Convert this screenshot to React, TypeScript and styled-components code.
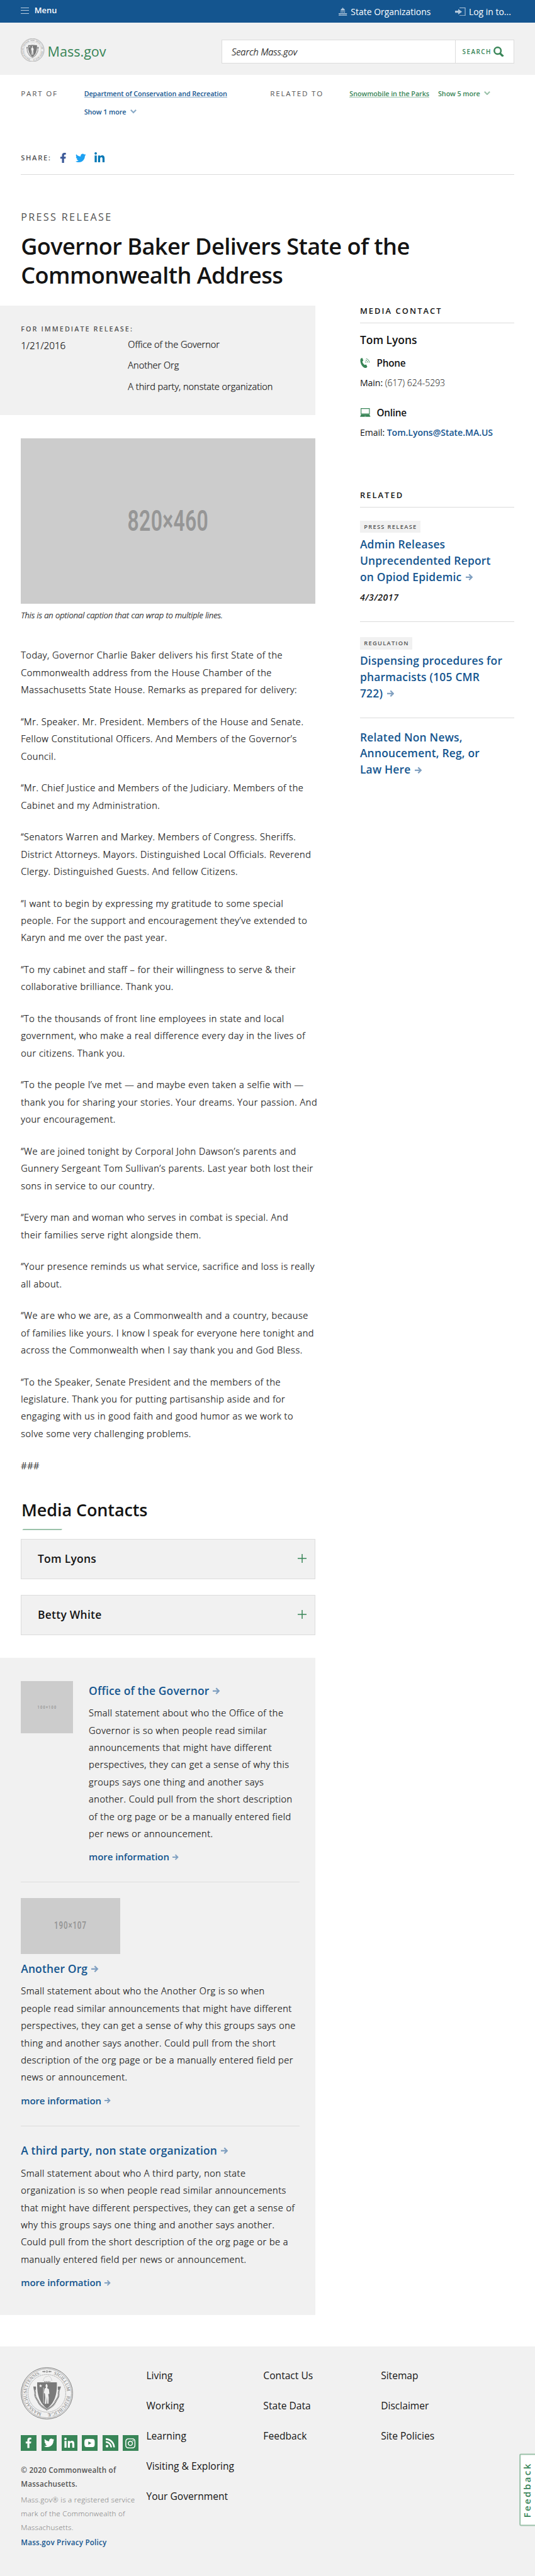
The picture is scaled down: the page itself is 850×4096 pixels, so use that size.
import React from "react";
import styled, { createGlobalStyle, css } from "styled-components";
import { FaFacebookF, FaTwitter, FaLinkedinIn, FaRss, FaInstagram } from "react-icons/fa";

/* 1rem = 10 design units */
const GlobalStyle = createGlobalStyle`
  html { font-size: 8.3008px; }
  body {
    margin: 0;
    background: #fff;
    color: #141414;
    font-family: "Open Sans", Lato, sans-serif;
    overflow-x: hidden;
  }
  *, *::before, *::after { box-sizing: border-box; }
  h1, h2, h3, p, ul { margin: 0; padding: 0; font-weight: inherit; }
  ul { list-style: none; }
  a { color: inherit; text-decoration: none; }
  svg { display: block; flex: none; }
`;

const blue = "#14558f";
const green = "#388557";
const grey = "#f1f1f1";
const rule = "#dcdcdc";

/* reading weight: between light and regular */
const bookWeight = css`
  font-weight: 300;
  -webkit-text-stroke: 0.25px currentColor;
`;

const Page = styled.div`
  position: relative;
  width: 102.4rem;
  height: 493.5rem;
  white-space: nowrap;
  overflow: hidden;
`;

/* ---------- header ---------- */

const TopBar = styled.nav`
  display: flex;
  justify-content: space-between;
  height: 4.3rem;
  padding: 0 4.6rem 0 4rem;
  background: ${blue};
  color: #fff;
`;

const MenuButton = styled.div`
  display: flex;
  align-items: center;
  gap: 1.1rem;
  height: 4rem;
  font-size: 1.55rem;
  font-weight: 600;
  line-height: 1;
`;

const Bars = styled.span`
  width: 1.5rem;
  height: 1.2rem;
  border: solid rgba(255, 255, 255, 0.7);
  border-width: 0.2rem 0;
  display: flex;
  align-items: center;
  &::before {
    content: "";
    width: 100%;
    height: 0.2rem;
    background: rgba(255, 255, 255, 0.7);
  }
`;

const UtilityNav = styled.div`
  display: flex;
  gap: 4.7rem;
  height: 4.5rem;
  font-size: 1.68rem;
  line-height: 1;
`;

const UtilityItem = styled.div<{ $gap: string }>`
  display: flex;
  align-items: center;
  gap: ${(p) => p.$gap};
`;

const Masthead = styled.header`
  display: flex;
  justify-content: space-between;
  align-items: center;
  height: 10rem;
  padding: 0 4rem;
  background: ${grey};
`;

const Brand = styled.div`
  display: flex;
  align-items: center;
  gap: 0.6rem;
  padding-top: 1.2rem;
  color: ${green};
  font-size: 2.6rem;
  line-height: 1;
  svg {
    margin-top: -0.6rem;
  }
`;

const SearchBox = styled.div`
  display: flex;
  width: 56rem;
  height: 4.6rem;
  margin-top: 1.2rem;
  border: 0.2rem solid ${rule};
  background: #fff;
`;

const SearchField = styled.div`
  flex: 1;
  display: flex;
  align-items: center;
  padding-left: 1.8rem;
  font-size: 1.75rem;
  font-style: italic;
  ${bookWeight}
`;

const SearchButton = styled.div`
  display: flex;
  align-items: center;
  gap: 0.4rem;
  width: 11.2rem;
  padding-left: 1.3rem;
  border-left: 0.2rem solid ${rule};
  color: ${green};
  font-size: 1.2rem;
  font-weight: 600;
  letter-spacing: 0.17rem;
`;

/* ---------- relationship links ---------- */

const Relationships = styled.section`
  display: grid;
  grid-template-columns: 12.1rem 35.6rem 15.2rem 1fr;
  padding: 1.8rem 4rem 0;
  font-size: 1.3rem;
  line-height: 3.5rem;
`;

const RelLabel = styled.div`
  color: #535353;
  font-size: 1.4rem;
  letter-spacing: 0.22rem;
`;

const RelList = styled.div<{ $color: string }>`
  display: flex;
  flex-wrap: wrap;
  align-content: flex-start;
  column-gap: 1.7rem;
  height: 7rem;
  color: ${(p) => p.$color};
  font-weight: 600;
  letter-spacing: -0.01rem;
`;

const RelLink = styled.a<{ $line: string }>`
  height: 2.6rem;
  margin-bottom: 0.9rem;
  border-bottom: 0.1rem solid ${(p) => p.$line};
`;

const ShowMore = styled.a`
  display: flex;
  align-items: center;
  gap: 0.8rem;
  height: 3.5rem;
`;

const ShareRow = styled.div`
  display: flex;
  align-items: center;
  height: 4.4rem;
  margin: 6rem 4rem 0;
  padding-bottom: 2rem;
  border-bottom: 0.1rem solid ${rule};
`;

const ShareLabel = styled.span`
  width: 7.1rem;
  color: #535353;
  font-size: 1.35rem;
  font-weight: 600;
  letter-spacing: 0.2rem;
`;

const ShareIcon = styled.span<{ $color: string }>`
  margin-right: 1.4rem;
  color: ${(p) => p.$color};
`;

/* ---------- title ---------- */

const TitleBlock = styled.section`
  padding: 6.95rem 4rem 0;
  height: 25rem;
`;

const Kicker = styled.p`
  color: #535353;
  font-size: 1.95rem;
  line-height: 2.4rem;
  letter-spacing: 0.28rem;
`;

const Title = styled.h1`
  margin-top: 1.6rem;
  font-size: 4.35rem;
  font-weight: 600;
  line-height: 5.5rem;
  letter-spacing: -0.065rem;
`;

const Columns = styled.main`
  display: grid;
  grid-template-columns: 60.4rem 29.5rem;
  column-gap: 8.5rem;
  height: 391rem;
`;

/* ---------- article ---------- */

const ReleaseBox = styled.section`
  height: 21rem;
  padding: 3.5rem 0 0 4rem;
  background: ${grey};
`;

const ReleaseLabel = styled.p`
  color: #535353;
  font-size: 1.3rem;
  font-weight: 600;
  line-height: 2rem;
  letter-spacing: 0.25rem;
`;

const ReleaseGrid = styled.div`
  display: grid;
  grid-template-columns: 20.5rem 1fr;
  font-size: 1.75rem;
  line-height: 4rem;
  ${bookWeight}
`;

const ReleaseDate = styled.div`
  font-size: 1.83rem;
  padding-top: 0.2rem;
`;

const Placeholder = styled.div<{ $w: string; $h: string; $fs: string; $ls?: string }>`
  display: flex;
  align-items: center;
  justify-content: center;
  width: ${(p) => p.$w};
  height: ${(p) => p.$h};
  background: #ccc;
  color: #969696;
  font-family: Roboto, sans-serif;
  font-weight: 600;
  font-size: ${(p) => p.$fs};
  letter-spacing: ${(p) => p.$ls ?? "0.05rem"};
  line-height: 1;
  span {
    transform: scaleX(0.7);
  }
`;

const Figure = styled.div`
  margin: 4.5rem 0 0 4rem;
`;

const Caption = styled.p`
  margin-top: 1.1rem;
  font-size: 1.55rem;
  font-style: italic;
  line-height: 2.4rem;
  ${bookWeight}
`;

const Article = styled.div`
  margin: 4.8rem 0 0 4rem;
  font-size: 1.75rem;
  line-height: 3.3rem;
  letter-spacing: 0.066rem;
  ${bookWeight}
  p + p {
    margin-top: 2.8rem;
  }
`;

const Line = styled.span`
  display: block;
`;

const ContactsHeading = styled.h2`
  margin: 4.45rem 0 0 4.1rem;
  height: 7.95rem;
  font-size: 3.25rem;
  font-weight: 600;
  line-height: 4.8rem;
  letter-spacing: -0.01rem;
  &::after {
    content: "";
    display: block;
    width: 7.5rem;
    height: 0.3rem;
    margin: 1.3rem 0 0 0.2rem;
    background: #9bc2aa;
    transform: skewX(-40deg);
  }
`;

const AccordionItem = styled.div`
  display: flex;
  justify-content: space-between;
  align-items: center;
  width: 56.4rem;
  height: 7.7rem;
  margin: 0 0 3rem 4rem;
  padding: 0 1.6rem 0.2rem 3.1rem;
  border: 0.2rem solid ${rule};
  background: ${grey};
  font-size: 2.1rem;
  font-weight: 600;
  letter-spacing: 0.035rem;
`;

const Orgs = styled.section`
  height: 125.9rem;
  margin-top: 4.4rem;
  padding: 4.5rem 3rem 0 4rem;
  background: ${grey};
  font-size: 1.75rem;
  line-height: 3.3rem;
`;

const Org = styled.div<{ $side?: boolean; $top?: string }>`
  padding-top: ${(p) => p.$top ?? "0"};
  ${(p) =>
    p.$side &&
    css`
      display: grid;
      grid-template-columns: 10rem 1fr;
      column-gap: 3rem;
    `}
  & + & {
    border-top: 0.1rem solid ${rule};
  }
`;

const OrgTitle = styled.h3<{ $top: string }>`
  display: flex;
  align-items: center;
  gap: 0.7rem;
  margin-top: ${(p) => p.$top};
  color: ${blue};
  font-size: 2.1rem;
  font-weight: 600;
  line-height: 3rem;
  letter-spacing: 0.02rem;
`;

const OrgText = styled.p`
  margin-top: 1.15rem;
  letter-spacing: 0.062rem;
  ${bookWeight}
`;

const MoreLink = styled.a`
  display: flex;
  align-items: center;
  gap: 0.6rem;
  height: 3.3rem;
  margin: 1.2rem 0 3.1rem;
  color: ${blue};
  font-size: 1.8rem;
  font-weight: 600;
  letter-spacing: -0.006rem;
`;

/* ---------- sidebar ---------- */

const SideHeading = styled.h2`
  height: 3.4rem;
  border-bottom: 0.2rem solid ${rule};
  font-size: 1.55rem;
  font-weight: 600;
  line-height: 2.1rem;
  letter-spacing: 0.25rem;
`;

const Person = styled.h3`
  margin-top: 1.7rem;
  font-size: 2.1rem;
  font-weight: 600;
  line-height: 3rem;
`;

const Method = styled.div<{ $top: string }>`
  display: flex;
  align-items: center;
  gap: 1.2rem;
  margin-top: ${(p) => p.$top};
  font-size: 1.85rem;
  font-weight: 600;
  line-height: 2.6rem;
  letter-spacing: -0.03rem;
`;

const MethodValue = styled.p`
  margin-top: 1.3rem;
  font-size: 1.7rem;
  font-weight: 400;
  line-height: 2.4rem;
  letter-spacing: -0.008rem;
  b {
    color: ${blue};
    font-weight: 600;
  }
  span {
    font-weight: 300;
  }
`;

const Related = styled.section`
  margin-top: 9.7rem;
`;

const RelatedItem = styled.div<{ $h: string; $top: string }>`
  height: ${(p) => p.$h};
  padding-top: ${(p) => p.$top};
  & + & {
    border-top: 0.1rem solid ${rule};
  }
`;

const Tag = styled.span`
  display: inline-block;
  height: 2.4rem;
  margin-bottom: 0.7rem;
  padding: 0 0.6rem 0 0.75rem;
  background: ${grey};
  color: #535353;
  font-size: 1.12rem;
  font-weight: 600;
  line-height: 2.4rem;
  letter-spacing: 0.16rem;
  vertical-align: top;
`;

const RelatedLink = styled.a`
  display: block;
  color: ${blue};
  font-size: 2.1rem;
  font-weight: 600;
  line-height: 3.1rem;
  letter-spacing: 0.024rem;
  svg {
    display: inline-block;
    margin-left: 0.8rem;
  }
`;

const RelatedDate = styled.p`
  margin-top: 1.2rem;
  font-size: 1.7rem;
  font-style: italic;
  font-weight: 600;
  line-height: 2.4rem;
  letter-spacing: 0.06rem;
`;

/* ---------- footer ---------- */

const Footer = styled.footer`
  display: grid;
  grid-template-columns: 24rem 22.4rem 22.5rem 1fr;
  height: 44rem;
  padding: 4rem 0 0 4rem;
  background: ${grey};
`;

const SocialRow = styled.div`
  display: flex;
  gap: 0.9rem;
  margin-top: 3rem;
`;

const SocialTile = styled.span`
  display: flex;
  align-items: center;
  justify-content: center;
  width: 3rem;
  height: 3rem;
  background: ${green};
  color: #fff;
`;

const Legal = styled.p<{ $top: string; $color: string; $weight: number }>`
  margin-top: ${(p) => p.$top};
  color: ${(p) => p.$color};
  font-size: 1.4rem;
  font-weight: ${(p) => p.$weight};
  line-height: 2.6rem;
  letter-spacing: 0.03rem;
`;

const FooterLinks = styled.ul`
  padding-top: 0.2rem;
  font-size: 1.88rem;
  line-height: 2.8rem;
  font-weight: 500;
  li {
    height: 5.78rem;
  }
`;

const FeedbackTab = styled.div`
  position: absolute;
  right: -0.4rem;
  top: 470.1rem;
  display: flex;
  align-items: center;
  justify-content: center;
  width: 3.4rem;
  height: 13.8rem;
  padding-left: 0.4rem;
  border: 0.3rem solid #9bc2aa;
  border-radius: 0 0.3rem 0.3rem 0;
  background: #fff;
  color: ${green};
  font-size: 1.8rem;
  font-weight: 600;
  letter-spacing: 0.3rem;
  line-height: 1;
  writing-mode: vertical-rl;
  transform: rotate(180deg);
`;

/* ---------- drawings ---------- */

const rem = (n: number) => `${n / 10}rem`;

const Icon = styled.svg<{ $w: number; $h: number }>`
  width: ${(p) => rem(p.$w)};
  height: ${(p) => rem(p.$h)};
`;

const Arrow = ({ w = 14 }: { w?: number }) => (
  <Icon viewBox="0 0 14 14" $w={w} $h={w} fill="none" stroke="#7f9fc0" strokeWidth="2.7">
    <path d="M0 7h11.5" />
    <path d="M6.4 1.6 11.8 7l-5.4 5.4" />
  </Icon>
);

const Chevron = ({ color }: { color: string }) => (
  <Icon viewBox="0 0 12 8" $w={12} $h={8} fill="none" stroke={color} strokeWidth="2.6">
    <path d="M1 1l5 5 5-5" />
  </Icon>
);

const Plus = () => (
  <Icon viewBox="0 0 17 17" $w={17} $h={17} stroke={green} strokeWidth="1.8">
    <path d="M0 8.5h17M8.5 0v17" />
  </Icon>
);

const Capitol = () => (
  <Icon viewBox="0 0 16 16" $w={16} $h={16} fill="#b3c8dc">
    <path d="M7.5 0h1v1.6C10.6 2 12 3.6 12 5.5H4C4 3.6 5.4 2 7.5 1.6z" />
    <path d="M3.5 6.5h9v1h-9zM4 8h1.6v2H4zM7.2 8h1.6v2H7.2zM10.4 8H12v2h-1.6zM0 10.8h16v1.5H0z" />
    <path d="M.6 12.8h1.6v1.7H.6zM3.2 12.8h1.6v1.7H3.2zM5.9 12.8h1.6v1.7H5.9zM8.5 12.8h1.6v1.7H8.5zM11.2 12.8h1.6v1.7h-1.6zM13.8 12.8h1.6v1.7h-1.6zM0 14.8h16V16H0z" />
  </Icon>
);

const Login = () => (
  <Icon viewBox="0 0 20 16" $w={20} $h={16} fill="#b3c8dc">
    <path d="M0 6h6V2.6L13.4 8 6 13.4V10H0z" />
    <path d="M8.5 0H20v16H8.5v-1.3h10.2V1.3H8.5z" />
  </Icon>
);

const Magnifier = () => (
  <Icon viewBox="0 0 20 20" $w={20} $h={20} fill="none" stroke={green}>
    <circle cx="8" cy="8" r="6.4" strokeWidth="3" />
    <path d="M12.4 12.8l6.2 6.2" strokeWidth="4" />
  </Icon>
);

const Phone = () => (
  <Icon viewBox="0 0 20 20" $w={20} $h={20} fill={green}>
    <path d="M1.6 1.3C2.4.5 3.8 0 4.6.6l1.6 4.2c.2.8-1.6 1.8-1.8 2.4.4 2.4 2.4 5.2 4.6 6.4.8.2 1.8-1.3 2.6-1l2.2 4c.2 1.4-1.8 3-3.6 2.8C5 18.6.6 11.4.6 5.4c0-1.6.2-3.2 1-4.1z" />
    <g fill="none" stroke={green} strokeWidth="1.1">
      <path d="M9.6 7.3c1 .2 1.7.9 2 2" />
      <path d="M10.6 4.5c2.4.4 3.8 2.3 4.1 4.6" />
      <path d="M11.6 1.7c3.8.6 6 3.6 6.3 7.4" />
    </g>
  </Icon>
);

const Laptop = () => (
  <Icon viewBox="0 0 20 17" $w={20} $h={17}>
    <path d="M2 .7h16V11H2z" fill="none" stroke={green} strokeWidth="1.4" />
    <path d="M2 12h16l2 4.5H0z" fill={green} />
    <path d="M8.5 15h3v.9h-3z" fill="#b9d3c3" />
  </Icon>
);

const Play = () => (
  <Icon viewBox="0 0 20 16" $w={20} $h={16}>
    <path
      fill="#fff"
      d="M4 .3Q10-.3 16 .3q3.4.3 3.7 3.5.4 4.2 0 8.4-.3 3.2-3.7 3.5-6 .6-12 0Q.6 15.4.3 12.2q-.4-4.2 0-8.4Q.6.6 4 .3z"
    />
    <path fill={green} d="M7.6 4.8v6.4L13.6 8z" />
  </Icon>
);

const Seal = ({ size, color = "#7a7a7a" }: { size: number; color?: string }) => {
  const id = `ring-${size}`;
  return (
    <Icon viewBox="0 0 100 100" $w={size} $h={size} fill="none" stroke={color}>
      <circle cx="50" cy="50" r="49.3" strokeWidth="1.2" />
      <circle cx="50" cy="50" r="47" strokeWidth="0.7" />
      <circle cx="50" cy="50" r="36" strokeWidth="0.8" strokeDasharray="1.2 .6" />
      <path id={id} d="M50 88.6A38.6 38.6 0 0 1 50 11.4A38.6 38.6 0 0 1 50 88.6" stroke="none" />
      <g fill={color} stroke="none" fontFamily="Liberation Serif, serif" fontSize="9.3">
        <text>
          <textPath href={`#${id}`} startOffset="10" textLength="99">MASSACHUSETTENSIS.</textPath>
        </text>
        <text>
          <textPath href={`#${id}`} startOffset="134" textLength="44">SIGILLUM</textPath>
        </text>
        <text>
          <textPath href={`#${id}`} startOffset="186" textLength="55">REIPUBLICÆ</textPath>
        </text>
      </g>
      <path d="M41 8.4l5 1.2v-2.4zM59 8.4l-5 1.2v-2.4z" fill={color} strokeWidth="0.6" />
      <circle cx="50" cy="8.4" r="1.7" strokeWidth="1.1" />
      <path d="M43 26.5c1-5 3-8.5 6-8.5s3-2 5-1c3 1.500 5 5 5.500 9.500" strokeWidth=".5" strokeDasharray="1 .5" />
      <path d="M45 27.5h12" strokeWidth="1.5" strokeDasharray="2.5 1.2" />
      <path
        d="M28 38c-3 5 0 8-.5 13-.5 6 3 9 6.5 16 3.5 7 9 10 16 14 7-4 12.5-7 16-14 3.5-7 7-10 6.5-16-.5-5 2.5-8-.5-13"
        strokeWidth="3.2"
        strokeDasharray="2 .7"
      />
      <path d="M24 37h5v6h-4zM71 37h6l-2 6h-4z" fill={color} stroke="none" />
      <path d="M31.5 29h37.5c1 20-3 39-19 50C34.5 68 30.5 49 31.5 29z" fill={color} stroke="none" />
      <g fill={grey} stroke="none">
        <path d="M38 32.5l.9 2 2.2.2-1.7 1.5.5 2.2-1.9-1.2-1.9 1.2.5-2.2-1.7-1.5 2.2-.2z" />
        <path d="M48.5 32l2 1.2 1 3-1 3.8 3.3 2.2 1 8.8-2.3.5L53.5 58l-.5 12h-2.2l-.8-14-1 14-3 .5 1-12.5-.8-7.5-2-1.500 1.500-8 2.700-1.500-1-4z" />
      </g>
      <path d="M43.5 39v30" stroke={grey} strokeWidth=".8" />
    </Icon>
  );
};

/* ---------- content ---------- */

const speech: string[][] = [
  [
    "Today, Governor Charlie Baker delivers his first State of the",
    "Commonwealth address from the House Chamber of the",
    "Massachusetts State House. Remarks as prepared for delivery:",
  ],
  [
    "“Mr. Speaker. Mr. President. Members of the House and Senate.",
    "Fellow Constitutional Officers. And Members of the Governor’s",
    "Council.",
  ],
  ["“Mr. Chief Justice and Members of the Judiciary. Members of the", "Cabinet and my Administration."],
  [
    "“Senators Warren and Markey. Members of Congress. Sheriffs.",
    "District Attorneys. Mayors. Distinguished Local Officials. Reverend",
    "Clergy. Distinguished Guests. And fellow Citizens.",
  ],
  [
    "“I want to begin by expressing my gratitude to some special",
    "people. For the support and encouragement they’ve extended to",
    "Karyn and me over the past year.",
  ],
  ["“To my cabinet and staff – for their willingness to serve & their", "collaborative brilliance. Thank you."],
  [
    "“To the thousands of front line employees in state and local",
    "government, who make a real difference every day in the lives of",
    "our citizens. Thank you.",
  ],
  [
    "“To the people I’ve met — and maybe even taken a selfie with —",
    "thank you for sharing your stories. Your dreams. Your passion. And",
    "your encouragement.",
  ],
  [
    "“We are joined tonight by Corporal John Dawson’s parents and",
    "Gunnery Sergeant Tom Sullivan’s parents. Last year both lost their",
    "sons in service to our country.",
  ],
  ["“Every man and woman who serves in combat is special. And", "their families serve right alongside them."],
  ["“Your presence reminds us what service, sacrifice and loss is really", "all about."],
  [
    "“We are who we are, as a Commonwealth and a country, because",
    "of families like yours. I know I speak for everyone here tonight and",
    "across the Commonwealth when I say thank you and God Bless.",
  ],
  [
    "“To the Speaker, Senate President and the members of the",
    "legislature. Thank you for putting partisanship aside and for",
    "engaging with us in good faith and good humor as we work to",
    "solve some very challenging problems.",
  ],
  ["###"],
];

const Lines = ({ of }: { of: string[] }) => (
  <>
    {of.map((t) => (
      <Line key={t}>{t}</Line>
    ))}
  </>
);

const More = () => (
  <MoreLink>
    more information <Arrow w={12} />
  </MoreLink>
);

export default function App() {
  return (
    <Page>
      <GlobalStyle />
      <TopBar>
        <MenuButton>
          <Bars />
          Menu
        </MenuButton>
        <UtilityNav>
          <UtilityItem $gap="0.7rem">
            <Capitol />
            State Organizations
          </UtilityItem>
          <UtilityItem $gap="0.6rem">
            <Login />
            Log in to...
          </UtilityItem>
        </UtilityNav>
      </TopBar>
      <Masthead>
        <Brand>
          <Seal size={45} />
          Mass.gov
        </Brand>
        <SearchBox>
          <SearchField>Search Mass.gov</SearchField>
          <SearchButton>
            SEARCH <Magnifier />
          </SearchButton>
        </SearchBox>
      </Masthead>

      <Relationships>
        <RelLabel>PART OF</RelLabel>
        <RelList $color={blue}>
          <RelLink $line="#89aac7">Department of Conservation and Recreation</RelLink>
          <ShowMore>
            Show 1 more <Chevron color="#89aac7" />
          </ShowMore>
        </RelList>
        <RelLabel>RELATED TO</RelLabel>
        <RelList $color={green}>
          <RelLink $line="#9bc2aa">Snowmobile in the Parks</RelLink>
          <ShowMore>
            Show 5 more <Chevron color="#9bc2aa" />
          </ShowMore>
        </RelList>
      </Relationships>
      <ShareRow>
        <ShareLabel>SHARE:</ShareLabel>
        <ShareIcon $color="#3b5998">
          <FaFacebookF size="2rem" />
        </ShareIcon>
        <ShareIcon $color="#1da1f2">
          <FaTwitter size="2rem" />
        </ShareIcon>
        <ShareIcon $color="#0077b5">
          <FaLinkedinIn size="2.2rem" />
        </ShareIcon>
      </ShareRow>

      <TitleBlock>
        <Kicker>PRESS RELEASE</Kicker>
        <Title>
          Governor Baker Delivers State of the
          <br />
          Commonwealth Address
        </Title>
      </TitleBlock>

      <Columns>
        <div>
          <ReleaseBox>
            <ReleaseLabel>FOR IMMEDIATE RELEASE:</ReleaseLabel>
            <ReleaseGrid>
              <ReleaseDate>1/21/2016</ReleaseDate>
              <div>
                <Line>Office of the Governor</Line>
                <Line>Another Org</Line>
                <Line>A third party, nonstate organization</Line>
              </div>
            </ReleaseGrid>
          </ReleaseBox>
          <Figure>
            <Placeholder $w="56.4rem" $h="31.6rem" $fs="5.5rem">
              <span>820×460</span>
            </Placeholder>
            <Caption>This is an optional caption that can wrap to multiple lines.</Caption>
          </Figure>
          <Article>
            {speech.map((p) => (
              <p key={p[0]}>
                <Lines of={p} />
              </p>
            ))}
          </Article>
          <ContactsHeading>Media Contacts</ContactsHeading>
          <AccordionItem>
            Tom Lyons <Plus />
          </AccordionItem>
          <AccordionItem>
            Betty White <Plus />
          </AccordionItem>
          <Orgs>
            <Org $side>
              <Placeholder $w="10rem" $h="10rem" $fs="0.95rem" $ls="0.22rem">
                <span>100×100</span>
              </Placeholder>
              <div>
                <OrgTitle $top="0.3rem">
                  Office of the Governor <Arrow />
                </OrgTitle>
                <OrgText>
                  <Lines
                    of={[
                      "Small statement about who the Office of the",
                      "Governor is so when people read similar",
                      "announcements that might have different",
                      "perspectives, they can get a sense of why this",
                      "groups says one thing and another says",
                      "another. Could pull from the short description",
                      "of the org page or be a manually entered field",
                      "per news or announcement.",
                    ]}
                  />
                </OrgText>
                <More />
              </div>
            </Org>
            <Org $top="3rem">
              <Placeholder $w="19rem" $h="10.7rem" $fs="2rem" $ls="0.14rem">
                <span>190×107</span>
              </Placeholder>
              <OrgTitle $top="1.3rem">
                Another Org <Arrow />
              </OrgTitle>
              <OrgText>
                <Lines
                  of={[
                    "Small statement about who the Another Org is so when",
                    "people read similar announcements that might have different",
                    "perspectives, they can get a sense of why this groups says one",
                    "thing and another says another. Could pull from the short",
                    "description of the org page or be a manually entered field per",
                    "news or announcement.",
                  ]}
                />
              </OrgText>
              <More />
            </Org>
            <Org $top="3rem">
              <OrgTitle $top="0.2rem">
                A third party, non state organization <Arrow />
              </OrgTitle>
              <OrgText>
                <Lines
                  of={[
                    "Small statement about who A third party, non state",
                    "organization is so when people read similar announcements",
                    "that might have different perspectives, they can get a sense of",
                    "why this groups says one thing and another says another.",
                    "Could pull from the short description of the org page or be a",
                    "manually entered field per news or announcement.",
                  ]}
                />
              </OrgText>
              <More />
            </Org>
          </Orgs>
        </div>

        <aside>
          <SideHeading>MEDIA CONTACT</SideHeading>
          <Person>Tom Lyons</Person>
          <Method $top="1.7rem">
            <Phone /> Phone
          </Method>
          <MethodValue>
            Main: <span>(617) 624-5293</span>
          </MethodValue>
          <Method $top="3.2rem">
            <Laptop /> Online
          </Method>
          <MethodValue>
            Email: <b>Tom.Lyons@State.MA.US</b>
          </MethodValue>
          <Related>
            <SideHeading>RELATED</SideHeading>
            <RelatedItem $top="2.5rem" $h="21.8rem">
              <Tag>PRESS RELEASE</Tag>
              <RelatedLink>
                <Line>Admin Releases</Line>
                <Line>Unprecendented Report</Line>
                <Line>
                  on Opiod Epidemic
                  <Arrow />
                </Line>
              </RelatedLink>
              <RelatedDate>4/3/2017</RelatedDate>
            </RelatedItem>
            <RelatedItem $top="2.9rem" $h="18.5rem">
              <Tag>REGULATION</Tag>
              <RelatedLink>
                <Line>Dispensing procedures for</Line>
                <Line>pharmacists (105 CMR</Line>
                <Line>
                  722)
                  <Arrow />
                </Line>
              </RelatedLink>
            </RelatedItem>
            <RelatedItem $top="2.1rem" $h="14rem">
              <RelatedLink>
                <Line>Related Non News,</Line>
                <Line>Annoucement, Reg, or</Line>
                <Line>
                  Law Here
                  <Arrow />
                </Line>
              </RelatedLink>
            </RelatedItem>
          </Related>
        </aside>
      </Columns>

      <Footer>
        <div>
          <Seal size={100} />
          <SocialRow>
            <SocialTile>
              <FaFacebookF size="2rem" />
            </SocialTile>
            <SocialTile>
              <FaTwitter size="2rem" />
            </SocialTile>
            <SocialTile>
              <FaLinkedinIn size="2.2rem" />
            </SocialTile>
            <SocialTile>
              <Play />
            </SocialTile>
            <SocialTile>
              <FaRss size="2rem" />
            </SocialTile>
            <SocialTile>
              <FaInstagram size="2.2rem" />
            </SocialTile>
          </SocialRow>
          <Legal $top="2.4rem" $color="#535353" $weight={600}>
            © 2020 Commonwealth of
            <br />
            Massachusetts.
          </Legal>
          <Legal $top="0.5rem" $color="#767676" $weight={300}>
            Mass.gov® is a registered service
            <br />
            mark of the Commonwealth of
            <br />
            Massachusetts.
          </Legal>
          <Legal $top="0.4rem" $color={blue} $weight={600}>
            Mass.gov Privacy Policy
          </Legal>
        </div>
        <FooterLinks>
          <li>Living</li>
          <li>Working</li>
          <li>Learning</li>
          <li>Visiting &amp; Exploring</li>
          <li>Your Government</li>
        </FooterLinks>
        <FooterLinks>
          <li>Contact Us</li>
          <li>State Data</li>
          <li>Feedback</li>
        </FooterLinks>
        <FooterLinks>
          <li>Sitemap</li>
          <li>Disclaimer</li>
          <li>Site Policies</li>
        </FooterLinks>
      </Footer>
      <FeedbackTab>Feedback</FeedbackTab>
    </Page>
  );
}
